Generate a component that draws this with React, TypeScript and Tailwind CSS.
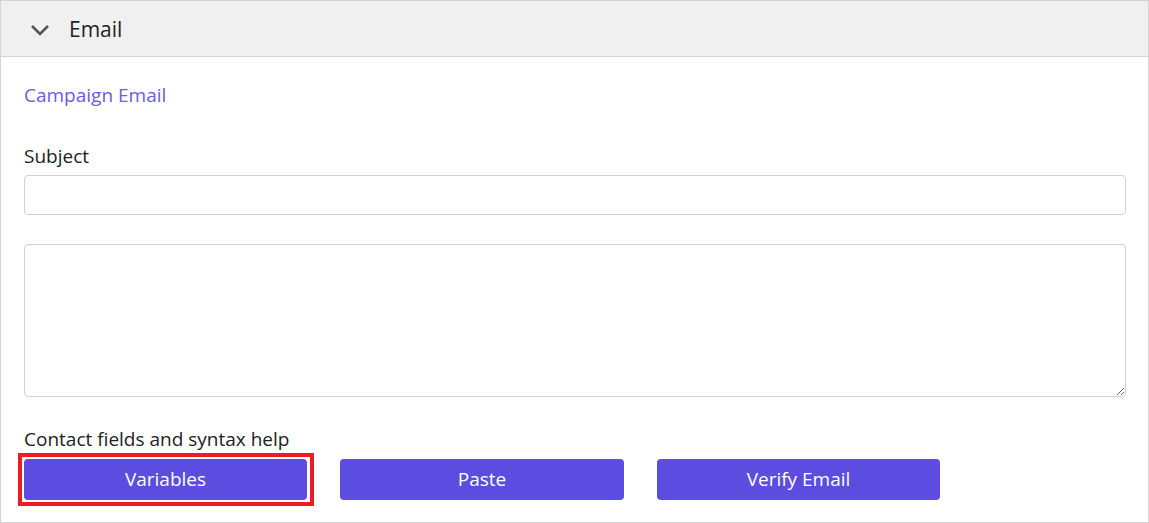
import React from "react";

export default function App() {
  const font = { fontFamily: '"Segoe UI", "Open Sans", "Noto Sans", sans-serif' };
  return (
    <div className="w-[1149px] h-[523px] bg-white" style={font}>
      <div className="h-[523px] border border-[#d4d4d4] flex flex-col">
        <div className="h-[56px] bg-[#f0f0f0] border-b border-[#d4d4d4] flex items-center pl-[29px]">
          <svg width="20" height="12" viewBox="0 0 20 12" className="mt-[2px]">
            <path d="M2 2 L10 10 L18 2" fill="none" stroke="#555" strokeWidth="2.6" />
          </svg>
          <span className="ml-[19px] text-[21px] text-[#222] leading-none mt-[2px]">Email</span>
        </div>
        <div className="flex flex-col pl-[23px] pr-[22px]">
          <div className="mt-[25px] text-[19px] leading-[26px] text-[#6a5ae8]">Campaign Email</div>
          <div className="mt-[35px] text-[19px] leading-[26px] text-[#222]">Subject</div>
          <input className="mt-[6px] h-[40px] w-full border border-[#d0d0d0] rounded-[4px] outline-none" />
          <textarea className="mt-[29px] h-[153px] w-full border border-[#d0d0d0] rounded-[4px] outline-none resize-y" />
          <div className="mt-[29px] text-[19px] leading-[26px] text-[#222]">Contact fields and syntax help</div>
          <div className="mt-[7px] flex gap-[33px]">
            <div className="relative">
              <button className="w-[283px] h-[41px] rounded-[4px] bg-[#5c4de0] text-white text-[19px]">Variables</button>
              <div className="absolute left-[-6px] top-[-6px] right-[-7px] bottom-[-6px] border-[4px] border-[#ed1c24] pointer-events-none" />
            </div>
            <button className="w-[284px] h-[41px] rounded-[4px] bg-[#5c4de0] text-white text-[19px]">Paste</button>
            <button className="w-[283px] h-[41px] rounded-[4px] bg-[#5c4de0] text-white text-[19px]">Verify Email</button>
          </div>
        </div>
      </div>
    </div>
  );
}
